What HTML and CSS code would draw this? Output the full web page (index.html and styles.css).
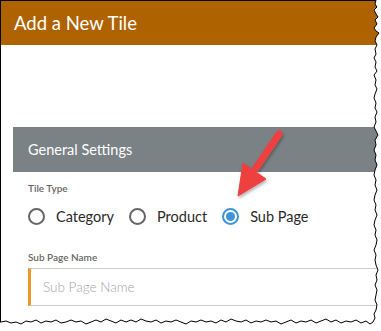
FILE: index.html
```html
<!DOCTYPE html>
<html>
<head>
<meta charset="utf-8">
<link rel="stylesheet" href="styles.css">
</head>
<body>
<div class="frame">
  <div class="header">Add a New Tile</div>
  <div class="body">
    <div class="section-head">General Settings</div>
    <div class="content">
      <div class="label tile-label">Tile Type</div>
      <div class="radios">
        <label class="radio"><span class="dot"></span><span class="rtext">Category</span></label>
        <label class="radio"><span class="dot"></span><span class="rtext">Product</span></label>
        <label class="radio checked"><span class="dot"></span><span class="rtext">Sub Page</span></label>
      </div>
      <div class="label name-label">Sub Page Name</div>
      <div class="input"><span class="placeholder">Sub Page Name</span></div>
    </div>
  </div>
</div>
<svg class="arrow" width="381" height="331" viewBox="0 0 381 331">
  <defs>
    <filter id="sh" x="-20%" y="-20%" width="140%" height="140%">
      <feDropShadow dx="1" dy="2" stdDeviation="1.5" flood-color="#000" flood-opacity="0.3"/>
    </filter>
  </defs>
  <g filter="url(#sh)" fill="#EF3F3F" stroke="#EF3F3F">
    <line x1="279" y1="134" x2="256" y2="168" stroke-width="7" stroke-linecap="round"/>
    <polygon points="238,196 243,163 266,179" stroke-width="1" stroke-linejoin="round"/>
  </g>
</svg>
<svg class="torn" width="381" height="331" viewBox="0 0 381 331">
  <polygon fill="#fff" points="381,0 376,0 375,4 377,7 374,10 376,14 378,17 375,20 377,24 374,28 376,31 379,33 376,37 375,41 377,45 375,49 376,54 374,58 376,62 375,67 377,71 374,75 376,80 375,85 377,89 375,94 374,98 376,103 375,108 377,112 375,117 376,122 374,127 376,131 378,135 375,140 376,145 374,150 376,155 375,160 377,165 375,170 374,175 376,180 375,185 377,190 375,195 374,200 376,205 375,210 377,215 375,220 374,225 376,230 375,235 377,240 376,245 374,250 376,255 375,260 376,265 378,270 376,275 377,280 375,285 377,290 376,295 375,300 377,305 376,310 374,314 375,318 373,322 370,324 366,321 361,323 356,320 351,322 346,321 341,323 336,320 331,322 326,319 321,321 316,323 311,320 306,322 301,321 296,323 291,320 286,322 281,324 276,321 271,322 266,320 261,322 256,321 251,323 246,320 241,322 236,321 231,319 226,322 221,320 216,323 211,321 206,322 201,320 196,322 191,321 186,324 181,322 176,320 171,322 166,321 161,323 156,320 151,322 146,321 141,319 136,322 131,320 126,322 121,320 116,323 111,321 106,319 101,322 96,320 91,322 86,324 81,321 76,322 71,320 66,322 61,323 56,320 51,322 46,321 41,323 36,320 31,322 26,321 21,324 16,322 11,323 6,321 1,322 0,322 0,331 381,331"/>
  <polyline fill="none" stroke="#000" stroke-width="1" points="376,0 375,4 377,7 374,10 376,14 378,17 375,20 377,24 374,28 376,31 379,33 376,37 375,41 377,45 375,49 376,54 374,58 376,62 375,67 377,71 374,75 376,80 375,85 377,89 375,94 374,98 376,103 375,108 377,112 375,117 376,122 374,127 376,131 378,135 375,140 376,145 374,150 376,155 375,160 377,165 375,170 374,175 376,180 375,185 377,190 375,195 374,200 376,205 375,210 377,215 375,220 374,225 376,230 375,235 377,240 376,245 374,250 376,255 375,260 376,265 378,270 376,275 377,280 375,285 377,290 376,295 375,300 377,305 376,310 374,314 375,318 373,322 370,324 366,321 361,323 356,320 351,322 346,321 341,323 336,320 331,322 326,319 321,321 316,323 311,320 306,322 301,321 296,323 291,320 286,322 281,324 276,321 271,322 266,320 261,322 256,321 251,323 246,320 241,322 236,321 231,319 226,322 221,320 216,323 211,321 206,322 201,320 196,322 191,321 186,324 181,322 176,320 171,322 166,321 161,323 156,320 151,322 146,321 141,319 136,322 131,320 126,322 121,320 116,323 111,321 106,319 101,322 96,320 91,322 86,324 81,321 76,322 71,320 66,322 61,323 56,320 51,322 46,321 41,323 36,320 31,322 26,321 21,324 16,322 11,323 6,321 1,322 0,322"/>
</svg>
</body>
</html>
```
FILE: styles.css
```css
html, body {
  margin: 0;
  padding: 0;
  background: #fff;
  width: 381px;
  height: 331px;
  overflow: hidden;
}
body {
  font-family: Lato, "Open Sans", sans-serif;
  position: relative;
}
.frame {
  width: 380px;
  height: 330px;
  border-left: 1px solid #000;
  border-top: 1px solid #000;
  background: #fff;
}
.header {
  height: 44px;
  background: #AF6300;
  color: #fff;
  font-size: 18.5px;
  display: flex;
  align-items: center;
  padding-left: 13px;
}
.body {
  padding: 82px 0 0 12px;
}
.section-head {
  height: 45px;
  background: #7A8286;
  color: #fff;
  font-size: 14.5px;
  display: flex;
  align-items: center;
  padding-left: 15px;
}
.content {
  padding-left: 15px;
}
.label {
  font-size: 10px;
  color: #666;
  font-weight: 600;
  line-height: 12px;
}
.tile-label {
  margin-top: 10px;
}
.radios {
  display: flex;
  align-items: center;
  margin-top: 12px;
  height: 20px;
}
.radio {
  display: flex;
  align-items: center;
  margin-right: 15px;
}
.dot {
  width: 13px;
  height: 13px;
  border: 2px solid #666;
  border-radius: 50%;
  box-sizing: content-box;
  display: flex;
  align-items: center;
  justify-content: center;
  margin-right: 11px;
}
.checked .dot {
  border-color: #3D93DA;
}
.checked .dot::after {
  content: "";
  width: 9px;
  height: 9px;
  border-radius: 50%;
  background: #3D93DA;
}
.rtext {
  font-size: 14.5px;
  color: #2a2a2a;
}
.name-label {
  margin-top: 25px;
}
.input {
  margin-top: 5px;
  height: 36px;
  border: 1px solid #ccc;
  border-left: 3px solid #F0952A;
  border-right: none;
  display: flex;
  align-items: center;
  padding-left: 12px;
}
.placeholder {
  font-size: 13.5px;
  color: #a6a6a6;
  font-weight: 300;
}
.arrow, .torn {
  position: absolute;
  left: 0;
  top: 0;
}
```
